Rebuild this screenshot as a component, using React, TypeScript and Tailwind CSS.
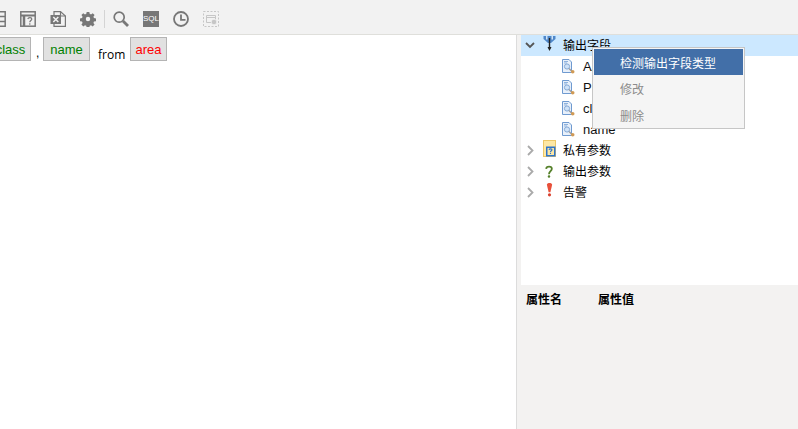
const cjk = { fontFamily: '"Liberation Sans", "Noto Sans CJK SC", sans-serif' };

function Tag({ text, color, className = "" }: { text: string; color: string; className?: string }) {
  return (
    <span
      className={`flex h-[24px] shrink-0 items-center justify-center border border-[#b4b4b4] bg-[#e1e1e1] text-[13px] leading-none ${color} ${className}`}
    >
      {text}
    </span>
  );
}

function ToolIcons() {
  return (
    <div className="flex h-[30px] items-center">
      {/* clipped form icon */}
      <svg width="6" height="16" viewBox="0 0 6 16" className="mr-[14px]" fill="none" stroke="#777" strokeWidth="1.500">
        <path d="M-2 .8H5.200V15.200H-2M-2 5.500H5.200M-2 10.500H5.200" />
      </svg>
      <svg width="16" height="16" viewBox="0 0 16 16" className="mr-[14px]" fill="none">
        <rect x=".8" y=".8" width="14.400" height="14.400" stroke="#777" strokeWidth="1.500" />
        <path d="M1 4.500H15" stroke="#777" strokeWidth="2" />
        <path d="M4 5V15" stroke="#777" strokeWidth="2.500" />
        <path d="M7.800 8c.5-1.800 4-1.800 4 0 0 1.500-2 1.500-2 3.200M9.800 12.300v1.500" stroke="#777" strokeWidth="1.200" />
      </svg>
      <svg width="16" height="16" viewBox="0 0 16 16" className="mr-[14px]" fill="none" stroke="#777" strokeWidth="1.200">
        <path d="M4 4V.6H10.500L15.400 5V15.400H4V13" />
        <path d="M10.500 .6V5H15.400" />
        <rect x=".5" y="4" width="10.500" height="9" fill="#777" stroke="none" />
        <path d="M3.300 6L8.300 11M8.300 6L3.300 11" stroke="#f2f2f2" strokeWidth="1.500" />
      </svg>
      <svg width="16" height="16" viewBox="-1 -1 18 18" className="mr-[8px]">
        <path
          fill="#777"
          fillRule="evenodd"
          d="M6.500 0h3l.4 2.200 1.500.6L13.300 1.500l2.100 2.100-1.300 1.900.6 1.500 2.300.5v3l-2.300.4-.6 1.500 1.300 1.900-2.100 2.100-1.900-1.300-1.500.6-.4 2.300h-3l-.4-2.300-1.500-.6-1.900 1.300L.6 14.300l1.300-1.900-.6-1.500L-1 10.500v-3l2.300-.5.6-1.500L.6 3.600 2.700 1.500l1.900 1.300 1.500-.6zM8 5.500a2.500 2.500 0 1 0 0 5 2.500 2.500 0 0 0 0-5z"
        />
      </svg>
      <div className="mr-[8px] h-[18px] w-px bg-[#d4d4d4]" />
      <svg width="16" height="16" viewBox="0 0 16 16" className="mr-[14px]" fill="none" stroke="#777">
        <circle cx="6.200" cy="6.200" r="5" strokeWidth="1.700" />
        <path d="M10 10L15 15" strokeWidth="2.800" />
      </svg>
      <span className="mr-[14px] flex h-[16px] w-[16px] items-center justify-center overflow-hidden whitespace-nowrap bg-[#777] text-[8px] leading-none text-white" style={{ fontFamily: '"Liberation Sans", sans-serif' }}>
        SQL
      </span>
      <svg width="16" height="16" viewBox="0 0 16 16" className="mr-[14px]" fill="none" stroke="#777" strokeWidth="1.800">
        <circle cx="8" cy="8" r="7" />
        <path d="M8 3.500V8.800H12.500" />
      </svg>
      <svg width="16" height="16" viewBox="0 0 16 16" fill="none" stroke="#c6c6c6">
        <rect x=".5" y=".5" width="15" height="15" strokeDasharray="2 1.500" />
        <path d="M3.500 4.500H12.500V11.500H3.500Z M3.500 6.500H12.500" />
        <circle cx="11" cy="11" r="2.800" fill="#c6c6c6" stroke="#f2f2f2" strokeWidth=".8" />
      </svg>
    </div>
  );
}

function FieldIcon() {
  return (
    <svg width="13" height="15" viewBox="0 0 13 15" className="shrink-0">
      <path d="M.5.5H7L9.500 3V13.500H.5Z" fill="#e8f0fa" stroke="#6f9ad0" />
      <path d="M2 2.500H6M2 4H5" stroke="#8fb2dd" />
      <circle cx="5" cy="7.500" r="2.600" fill="#cfe2f7" stroke="#85a9d6" />
      <path d="M7 9.500L9.500 12" stroke="#9a9a9a" strokeWidth="1.200" />
      <circle cx="10.700" cy="12.700" r="1.800" fill="#d09a55" />
    </svg>
  );
}

function Chevron({ open }: { open?: boolean }) {
  return open ? (
    <svg width="10" height="7" viewBox="0 0 10 7" fill="none" stroke="#555" strokeWidth="1.800" className="ml-[-1px]">
      <path d="M1 1L5 5L9 1" />
    </svg>
  ) : (
    <svg width="7" height="11" viewBox="0 0 7 11" fill="none" stroke="#aaa" strokeWidth="1.800">
      <path d="M1 1L5.500 5.500L1 10" />
    </svg>
  );
}

function ParentRow({ icon, label, open, active }: { icon: React.ReactNode; label: string; open?: boolean; active?: boolean }) {
  return (
    <div className={`flex h-[21px] items-center pl-[4px] ${active ? "bg-[#cce8ff]" : ""}`}>
      <span className="flex w-[10px] justify-center"><Chevron open={open} /></span>
      <span className="ml-[7px] flex h-[21px] w-[14px] items-start justify-center">{icon}</span>
      <span className="ml-[7px] text-[12px] leading-none text-black">{label}</span>
    </div>
  );
}

function ChildRow({ label }: { label: string }) {
  return (
    <div className="flex h-[21px] items-center pl-[41px]">
      <FieldIcon />
      <span className="ml-[8px] text-[13px] leading-none text-[#111]">{label}</span>
    </div>
  );
}

export default function App() {
  return (
    <div className="flex h-[429px] w-[798px] flex-col overflow-hidden bg-white" style={cjk}>
      <div className="flex h-[35px] shrink-0 items-center border-b border-[#dfdfdb] bg-[#f2f2f2] pt-[4px]">
        <ToolIcons />
      </div>
      <div className="flex min-h-0 flex-1">
        <div className="flex w-[516px] shrink-0 items-start overflow-hidden pt-[2px]">
          <Tag text="class" color="text-[#008000]" className="ml-[-10px] w-[41px]" />
          <span className="ml-[5px] mr-[5px] mt-[10px] w-[2px] text-[12px] leading-none">,</span>
          <Tag text="name" color="text-[#008000]" className="w-[47px]" />
          <span className="ml-[8px] mr-[5px] mt-[12px] w-[27px] text-[12px] leading-none text-black" style={{ fontFamily: '"Open Sans", sans-serif' }}>from</span>
          <Tag text="area" color="text-[#ff0000]" className="w-[37px]" />
        </div>
        <div className="flex w-[5px] shrink-0 border-l border-[#dcdcdc] bg-[#f3f2f1]" />
        <div className="relative flex min-w-0 flex-1 flex-col">
          <div className="h-[250px] shrink-0 bg-white">
            <ParentRow
              open
              active
              label="输出字段"
              icon={
                <svg width="13" height="15" viewBox="0 0 13 15" fill="none" className="mt-px">
                  <path d="M.5 0H12.500V3L8 7H5L.5 3Z" fill="#4f87c9" />
                  <path d="M3 0H4.500V3.500H3ZM8.500 0H10V3.500H8.500Z" fill="#cfe4f7" />
                  <path d="M6.500 2V13" stroke="#222" strokeWidth="1.400" />
                  <path d="M4.500 11H8.500L6.500 15Z" fill="#222" />
                </svg>
              }
            />
            <ChildRow label="AAA" />
            <ChildRow label="Province" />
            <ChildRow label="class" />
            <ChildRow label="name" />
            <ParentRow
              label="私有参数"
              icon={
                <svg width="13" height="17" viewBox="0 0 13 17">
                  <rect x=".5" y=".5" width="12" height="16" fill="#fde7a4" stroke="#edc768" />
                  <rect x="3" y="6.500" width="9.500" height="10" fill="#2f74c9" />
                  <rect x="4.500" y="8" width="6.500" height="7" fill="#fde7a4" />
                  <path d="M6 9.800c.5-1.300 3-1.300 3 0 0 1-1.500 1-1.500 2.200M7.500 12.800V14" fill="none" stroke="#2f74c9" strokeWidth="1.100" />
                </svg>
              }
            />
            <ParentRow
              label="输出参数"
              icon={
                <svg width="8" height="13" viewBox="0 0 9 14" fill="none" className="mt-[4px]">
                  <path d="M1.300 4C1.500 .6 7.700 .6 7.700 4c0 2.500-3.200 2.800-3.200 6" stroke="#55802a" strokeWidth="2" />
                  <circle cx="4.500" cy="12.500" r="1.400" fill="#55802a" />
                </svg>
              }
            />
            <ParentRow
              label="告警"
              icon={
                <svg width="7" height="14" viewBox="0 0 7 16" className="mt-px">
                  <path d="M.5 2C.5-.5 6.500-.5 6.500 2L4.500 10.500H2.500Z" fill="#e8503a" />
                  <circle cx="3.500" cy="13.500" r="1.800" fill="#d8402e" />
                </svg>
              }
            />
          </div>
          <div className="flex-1 bg-[#f3f2f1] pl-[5px] pt-[7px]">
            <div className="flex text-[12px] font-bold leading-[16px] text-black">
              <span className="w-[72px]">属性名</span>
              <span>属性值</span>
            </div>
          </div>
          {/* context menu */}
          <div className="absolute left-[71px] top-[12px] h-[82px] w-[153px] border border-[#c6c6c6] bg-[#f5f5f5] px-px pt-px text-[12px] leading-none">
            <div className="flex h-[26px] items-center bg-[#426fa8] pl-[26px] pt-[4px] text-white">检测输出字段类型</div>
            <div className="flex h-[27px] items-center pl-[26px] pt-[2px] text-[#8c8c8c]">修改</div>
            <div className="flex h-[27px] items-center pl-[26px] pt-[2px] text-[#8c8c8c]">删除</div>
          </div>
        </div>
      </div>
    </div>
  );
}
